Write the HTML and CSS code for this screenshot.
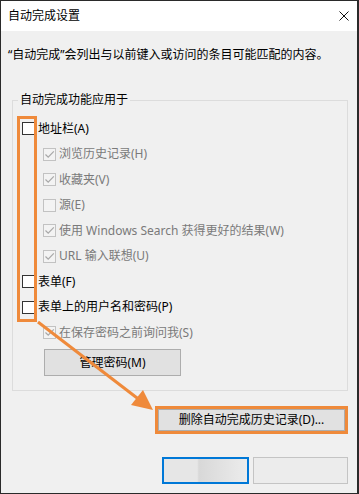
FILE: index.html
```html
<!DOCTYPE html>
<html lang="zh-CN">
<head>
<meta charset="utf-8">
<title>自动完成设置</title>
<link rel="stylesheet" href="styles.css">
</head>
<body>
<div class="window">
  <div class="titlebar">
    <span class="title">自动完成设置</span>
    <svg class="close" width="10" height="10" viewBox="0 0 10 10"><path d="M0.5 0.5 L9.5 9.5 M9.5 0.5 L0.5 9.5" stroke="#111" stroke-width="1" fill="none"/></svg>
  </div>
  <div class="content">
    <p class="desc">“自动完成”会列出与以前键入或访问的条目可能匹配的内容。</p>
    <fieldset class="group">
      <legend>自动完成功能应用于</legend>
      <div class="row"><span class="cb"></span><span>地址栏(A)</span></div>
      <div class="row sub disabled"><span class="cb checked"><svg viewBox="0 0 11 11" width="11" height="11"><path d="M1.5 5.5 L4.2 8.2 L9.8 2.3" stroke="#a8a8a8" stroke-width="1.2" fill="none"/></svg></span><span>浏览历史记录(H)</span></div>
      <div class="row sub disabled"><span class="cb checked"><svg viewBox="0 0 11 11" width="11" height="11"><path d="M1.5 5.5 L4.2 8.2 L9.8 2.3" stroke="#a8a8a8" stroke-width="1.2" fill="none"/></svg></span><span>收藏夹(V)</span></div>
      <div class="row sub disabled"><span class="cb checked"></span><span>源(E)</span></div>
      <div class="row sub disabled"><span class="cb checked"><svg viewBox="0 0 11 11" width="11" height="11"><path d="M1.5 5.5 L4.2 8.2 L9.8 2.3" stroke="#a8a8a8" stroke-width="1.2" fill="none"/></svg></span><span>使用 Windows Search 获得更好的结果(W)</span></div>
      <div class="row sub disabled"><span class="cb checked"><svg viewBox="0 0 11 11" width="11" height="11"><path d="M1.5 5.5 L4.2 8.2 L9.8 2.3" stroke="#a8a8a8" stroke-width="1.2" fill="none"/></svg></span><span>URL 输入联想(U)</span></div>
      <div class="row"><span class="cb"></span><span>表单(F)</span></div>
      <div class="row"><span class="cb"></span><span>表单上的用户名和密码(P)</span></div>
      <div class="row sub disabled"><span class="cb checked"><svg viewBox="0 0 11 11" width="11" height="11"><path d="M1.5 5.5 L4.2 8.2 L9.8 2.3" stroke="#a8a8a8" stroke-width="1.2" fill="none"/></svg></span><span>在保存密码之前询问我(S)</span></div>
      <button class="btn manage">管理密码(M)</button>
    </fieldset>
    <div class="delete-row"><button class="btn delete">删除自动完成历史记录(D)...</button></div>
    <div class="actions"><button class="btn ok"></button><button class="btn cancel"></button></div>
  </div>
  <svg class="annot" width="359" height="494" viewBox="0 0 359 494">
    <rect x="18.5" y="117.5" width="17" height="203" fill="none" stroke="#ef8a3b" stroke-width="3"/>
    <line x1="38" y1="322" x2="141" y2="401" stroke="#ef8a3b" stroke-width="3"/>
    <polygon points="153,410 131,405 143,390" fill="#ef8a3b"/>
  </svg>
</div>
</body>
</html>
```

FILE: styles.css
```css
html, body {
  margin: 0;
  padding: 0;
  background: #f0f0f0;
}
body {
  font-family: "Noto Sans", "Noto Sans CJK SC", sans-serif;
  font-size: 12px;
  line-height: 16px;
  color: #000;
}
.window {
  position: relative;
  width: 359px;
  height: 494px;
  box-sizing: border-box;
  border: 1px solid #2a2a2a;
  border-right-width: 2px;
  background: #f0f0f0;
  overflow: hidden;
}
.titlebar {
  height: 30px;
  background: #fff;
  display: flex;
  align-items: center;
  justify-content: space-between;
  padding: 0 8px 0 7px;
}
.title {
  line-height: 30px;
}
.close {
  display: block;
  margin-top: -1px;
}
.content {
  display: flex;
  flex-direction: column;
}
.desc {
  margin: 0;
  padding: 16px 0 0 7px;
  line-height: 16px;
  white-space: nowrap;
}
.group {
  margin: 29px 9px 0 11px;
  padding: 8px 0 14px 0;
  border: 1px solid #dcdcdc;
  min-inline-size: 0;
}
.group legend {
  margin-left: 5px;
  padding: 0 2px;
  line-height: 16px;
}
.row {
  height: 25.5px;
  display: flex;
  align-items: center;
  gap: 3px;
  padding-left: 9px;
  white-space: nowrap;
}
.row.sub {
  padding-left: 30px;
}
.row.disabled {
  color: #7a7a7a;
}
.cb {
  width: 13px;
  height: 13px;
  box-sizing: border-box;
  border: 1px solid #333;
  background: #fff;
  display: flex;
  align-items: center;
  justify-content: center;
  flex: none;
}
.cb.checked {
  border-color: #c2c2c2;
  background: #f3f3f3;
}
.cb svg {
  display: block;
}
.btn {
  font: inherit;
  color: #000;
  background: #e1e1e1;
  border: 1px solid #adadad;
  padding: 0;
  margin: 0;
  box-sizing: border-box;
}
.manage {
  display: block;
  margin: 3.5px 0 0 31px;
  width: 137px;
  height: 27px;
}
.delete-row {
  display: flex;
  justify-content: flex-end;
  padding-right: 12px;
  margin-top: 18px;
}
.delete {
  width: 187px;
  height: 22px;
  outline: 3px solid #ef8a3b;
  outline-offset: 0;
}
.actions {
  display: flex;
  justify-content: flex-end;
  gap: 4px;
  padding-right: 9px;
  margin-top: 26px;
}
.ok {
  width: 87px;
  height: 27px;
  border: 2px solid #0078d7;
  background: linear-gradient(90deg, #e6e6e6 0%, #e6e6e6 40%, #d8d8d8 42%, #ececec 100%);
}
.cancel {
  width: 95px;
  height: 27px;
  background: #ececec;
  border-color: #c4c4c4;
}
.annot {
  position: absolute;
  left: -1px;
  top: -1px;
  pointer-events: none;
}
```
